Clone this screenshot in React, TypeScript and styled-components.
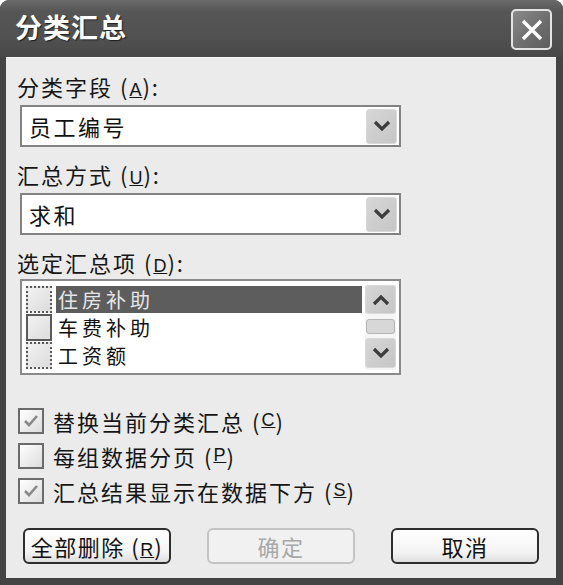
import React, { useState } from 'react';
import styled, { createGlobalStyle } from 'styled-components';

const GlobalStyle = createGlobalStyle`
  html, body {
    margin: 0;
    padding: 0;
    background: #ffffff;
  }
  body {
    font-family: "Noto Sans CJK SC", "Noto Sans", sans-serif;
  }
`;

const Window = styled.div`
  width: 563px;
  height: 585px;
  box-sizing: border-box;
  background: #444444;
  border-radius: 9px 9px 0 0;
  display: flex;
  flex-direction: column;
  overflow: hidden;
`;

const TitleBar = styled.div`
  height: 57px;
  flex-shrink: 0;
  display: flex;
  align-items: center;
  justify-content: space-between;
  padding: 0 11px 4px 15px;
  box-sizing: border-box;
  background: linear-gradient(to bottom, #6a6a6a 0%, #565656 20%, #505050 70%, #484848 100%);
`;

const Title = styled.div`
  color: #ffffff;
  font-size: 27px;
  font-weight: 700;
  letter-spacing: 1px;
  text-shadow: 1px 1px 1px #1e1e1e;
`;

const CloseButton = styled.div`
  width: 41px;
  height: 41px;
  margin-top: 6px;
  box-sizing: border-box;
  border: 2px solid #e4e4e4;
  border-radius: 5px;
  background: linear-gradient(135deg, #8a8a8a 0%, #6c6c6c 60%, #5e5e5e 100%);
  display: flex;
  align-items: center;
  justify-content: center;
`;

const Body = styled.div`
  flex: 1;
  margin: 0 7px 7px 6px;
  background: #ebebeb;
  border-top: 1px solid #fafafa;
  padding: 15px 0 0 14px;
  display: flex;
  flex-direction: column;
`;

const Label = styled.div<{ $top: number }>`
  margin: ${(p) => p.$top}px 0 0 -3px;
  height: 26px;
  line-height: 26px;
  font-size: 22px;
  color: #161616;
  letter-spacing: 2px;
`;

const Key = styled.span`
  text-decoration: underline;
  font-family: "Liberation Sans", sans-serif;
  font-size: 18px;
  letter-spacing: 1px;
`;

const Combo = styled.div`
  margin-top: 6px;
  width: 381px;
  height: 42px;
  box-sizing: border-box;
  border: 2px solid #838383;
  background: #ffffff;
  display: flex;
  align-items: center;
  justify-content: space-between;
  padding: 0 2px 0 7px;
`;

const ComboText = styled.div`
  font-size: 22px;
  color: #111;
  letter-spacing: 2.5px;
`;

const ArrowButton = styled.div<{ $h: number }>`
  width: 31px;
  height: ${(p) => p.$h}px;
  box-sizing: border-box;
  border-radius: 3px;
  background: linear-gradient(135deg, #d6d6d6 0%, #c6c6c6 100%);
  border: 1px solid #d9d9d9;
  display: flex;
  align-items: center;
  justify-content: center;
`;

const ListBox = styled.div`
  margin-top: 4px;
  width: 381px;
  height: 96px;
  box-sizing: border-box;
  border: 2px solid #8a8a8a;
  background: #ffffff;
  display: flex;
  padding: 4px 3px 3px 4px;
`;

const Items = styled.div`
  flex: 1;
  display: flex;
  flex-direction: column;
`;

const Item = styled.div`
  height: 29px;
  display: flex;
  align-items: center;
`;

const ListCheck = styled.div<{ $focus?: boolean }>`
  width: 26px;
  height: 27px;
  box-sizing: border-box;
  border: 2px ${(p) => (p.$focus ? 'dotted' : 'solid')} #5a5a5a;
  background: linear-gradient(135deg, #f2f2f2 0%, #dcdcdc 100%);
  margin-right: 4px;
`;

const ItemText = styled.div<{ $selected?: boolean }>`
  flex: 1;
  height: 27px;
  line-height: 27px;
  font-size: 20px;
  letter-spacing: 4px;
  color: ${(p) => (p.$selected ? '#e6e6e6' : '#111')};
  background: ${(p) => (p.$selected ? '#5d5d5d' : 'transparent')};
  margin-right: 3px;
  padding-left: 2px;
`;

const ScrollBar = styled.div`
  width: 31px;
  display: flex;
  flex-direction: column;
  align-items: center;
  background: #f6f6f6;
`;

const Thumb = styled.div`
  width: 29px;
  height: 15px;
  margin: 5px 0 4px;
  box-sizing: border-box;
  border: 1px solid #b5b5b5;
  border-radius: 3px;
  background: #d7d7d7;
`;

const Options = styled.div`
  margin-top: 28px;
  display: flex;
  flex-direction: column;
`;

const OptionRow = styled.label`
  height: 35px;
  display: flex;
  align-items: center;
  margin-left: -2px;
  font-size: 22px;
  color: #151515;
  letter-spacing: 2px;
`;

const CheckBox = styled.div`
  width: 26px;
  height: 26px;
  box-sizing: border-box;
  border: 2px solid #6b6b6b;
  background: linear-gradient(135deg, #ffffff 0%, #dcdcdc 100%);
  margin-right: 9px;
  display: flex;
  align-items: center;
  justify-content: center;
`;

const ButtonRow = styled.div`
  margin-top: 20px;
  display: flex;
  gap: 36px;
  padding-left: 3px;
`;

const Button = styled.button`
  width: 148px;
  height: 36px;
  box-sizing: border-box;
  border: 2px solid #2e2e2e;
  border-radius: 6px;
  background: linear-gradient(to bottom, #ffffff 0%, #f3f3f3 70%, #dedede 100%);
  font-family: "Noto Sans CJK SC", "Noto Sans", sans-serif;
  font-size: 22px;
  letter-spacing: 1.5px;
  color: #111;
  padding: 0;
  white-space: nowrap;
  cursor: pointer;

  &:disabled {
    border-color: #c4c4c4;
    color: #a8a8a8;
    background: #f1f1f1;
    cursor: default;
  }
`;

const Chevron: React.FC<{ up?: boolean }> = ({ up }) => (
  <svg width="18" height="12" viewBox="0 0 18 12">
    <path
      d={up ? 'M2 10 L9 3 L16 10' : 'M2 2 L9 9 L16 2'}
      fill="none"
      stroke="#3c3c3c"
      strokeWidth="3.2"
    />
  </svg>
);

const CheckMark = () => (
  <svg width="16" height="14" viewBox="0 0 16 14">
    <path d="M2 7 L6 11 L14 2" fill="none" stroke="#8a8a8a" strokeWidth="2.6" />
  </svg>
);

const summaryItems = ['住房补助', '车费补助', '工资额'];

const options = [
  { text: '替换当前分类汇总', key: 'C', checked: true },
  { text: '每组数据分页', key: 'P', checked: false },
  { text: '汇总结果显示在数据下方', key: 'S', checked: true },
];

const App: React.FC = () => {
  const [selected] = useState(0);

  return (
    <>
      <GlobalStyle />
      <Window>
        <TitleBar>
          <Title>分类汇总</Title>
          <CloseButton>
            <svg width="26" height="26" viewBox="0 0 26 26">
              <path d="M4 4 L22 22 M22 4 L4 22" stroke="#ffffff" strokeWidth="3.4" />
            </svg>
          </CloseButton>
        </TitleBar>
        <Body>
          <Label $top={0}>
            分类字段 (<Key>A</Key>):
          </Label>
          <Combo>
            <ComboText>员工编号</ComboText>
            <ArrowButton $h={35}>
              <Chevron />
            </ArrowButton>
          </Combo>

          <Label $top={14}>
            汇总方式 (<Key>U</Key>):
          </Label>
          <Combo>
            <ComboText>求和</ComboText>
            <ArrowButton $h={35}>
              <Chevron />
            </ArrowButton>
          </Combo>

          <Label $top={14}>
            选定汇总项 (<Key>D</Key>):
          </Label>
          <ListBox>
            <Items>
              {summaryItems.map((item, i) => (
                <Item key={item}>
                  <ListCheck $focus={i !== 1} />
                  <ItemText $selected={i === selected}>{item}</ItemText>
                </Item>
              ))}
            </Items>
            <ScrollBar>
              <ArrowButton $h={29}>
                <Chevron up />
              </ArrowButton>
              <Thumb />
              <ArrowButton $h={30}>
                <Chevron />
              </ArrowButton>
            </ScrollBar>
          </ListBox>

          <Options>
            {options.map((o) => (
              <OptionRow key={o.key}>
                <CheckBox>{o.checked && <CheckMark />}</CheckBox>
                {o.text} (<Key>{o.key}</Key>)
              </OptionRow>
            ))}
          </Options>

          <ButtonRow>
            <Button>
              全部删除 (<Key>R</Key>)
            </Button>
            <Button disabled>确定</Button>
            <Button>取消</Button>
          </ButtonRow>
        </Body>
      </Window>
    </>
  );
};

export default App;
